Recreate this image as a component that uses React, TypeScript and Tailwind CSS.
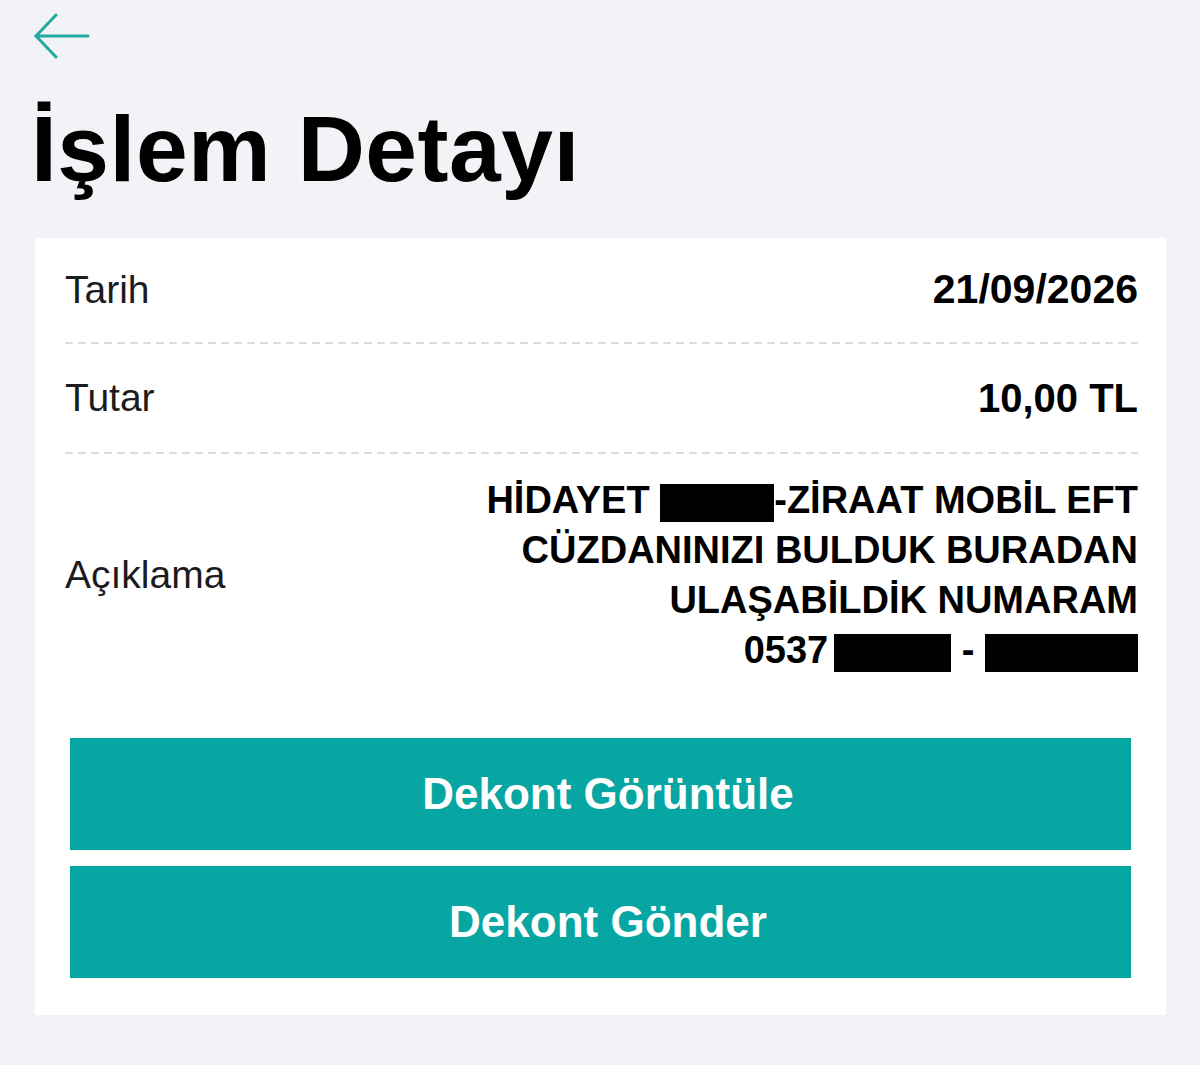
import React from 'react';

const font = { fontFamily: '"Liberation Sans", Arial, sans-serif' };

function BackArrow() {
  return (
    <svg width="56" height="48" viewBox="0 0 56 48" fill="none" aria-hidden="true">
      <path d="M2 24H54" stroke="#24a8a3" strokeWidth="3" strokeLinecap="round" />
      <path d="M22 3L2 24L22 45" stroke="#24a8a3" strokeWidth="3" strokeLinecap="round" strokeLinejoin="round" />
    </svg>
  );
}

function Dashed() {
  return (
    <div className="h-[2px] w-full bg-[repeating-linear-gradient(to_right,#dcdcdc_0_8px,transparent_8px_13px)]" />
  );
}

function Redact({ w }: { w: number }) {
  return <span className="inline-block h-[38px] bg-black align-[-9px]" style={{ width: w }} />;
}

export default function App() {
  return (
    <div className="min-h-[1065px] w-[1200px] bg-[#f2f3f7] text-black" style={font}>
      <div className="pl-[34px] pt-[12px]">
        <BackArrow />
      </div>

      <h1 className="ml-[31px] mt-[34px] text-[93px] font-bold leading-[110px] tracking-[0.5px]">
        İşlem Detayı
      </h1>

      <div className="ml-[35px] mt-[34px] w-[1131px] bg-white pb-[37px]">
        <div className="pl-[30px] pr-[28px]">
          <div className="flex h-[104px] items-center justify-between">
            <span className="text-[39px] text-[#1c1c1e]">Tarih</span>
            <span className="text-[41px] font-bold">21/09/2026</span>
          </div>
          <Dashed />
          <div className="flex h-[108px] items-center justify-between">
            <span className="text-[39px] text-[#1c1c1e]">Tutar</span>
            <span className="text-[40px] font-bold">10,00 TL</span>
          </div>
          <Dashed />
          <div className="flex items-center justify-between pt-[21px]">
            <span className="text-[39px] text-[#1c1c1e]">Açıklama</span>
            <div className="text-right text-[38px] font-bold leading-[50px]">
              <div>
                HİDAYET <Redact w={114} />-ZİRAAT MOBİL EFT
              </div>
              <div>CÜZDANINIZI BULDUK BURADAN</div>
              <div>ULAŞABİLDİK NUMARAM</div>
              <div>
                0537
                <span className="ml-[6px]" />
                <Redact w={117} /> - <Redact w={153} />
              </div>
            </div>
          </div>
        </div>

        <div className="mt-[63px] flex flex-col gap-[16px] px-[35px]">
          <button className="flex h-[112px] w-full items-center justify-center bg-[#08a6a2] pl-[15px] text-[44px] font-bold text-white">
            Dekont Görüntüle
          </button>
          <button className="flex h-[112px] w-full items-center justify-center bg-[#08a6a2] pl-[15px] text-[44px] font-bold text-white">
            Dekont Gönder
          </button>
        </div>
      </div>
    </div>
  );
}
